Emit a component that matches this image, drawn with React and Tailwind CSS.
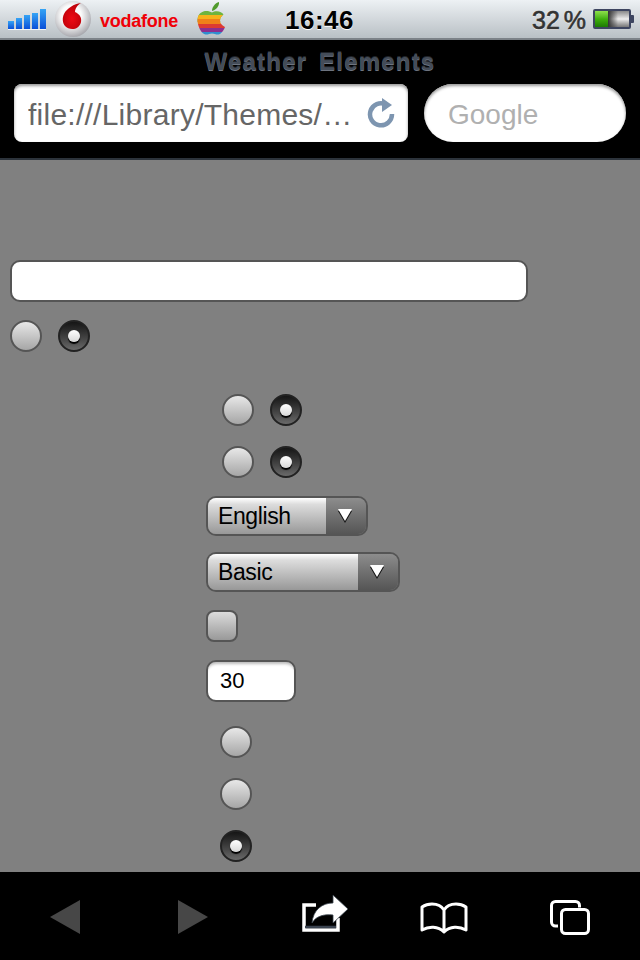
import React from 'react';

const Radio = ({ on }) =>
  on ? (
    <div className="w-8 h-8 rounded-full border-2 border-[#222] bg-gradient-to-b from-[#161616] to-[#6a6a6a] flex items-center justify-center flex-shrink-0">
      <div className="w-3 h-3 rounded-full bg-gradient-to-b from-white to-[#d8d8d8] shadow-[0_2px_1px_#000]" />
    </div>
  ) : (
    <div className="w-8 h-8 rounded-full border-2 border-[#555] bg-gradient-to-b from-[#e8e8e8] to-[#a6a6a6] flex-shrink-0" />
  );

const Select = ({ label, width }) => (
  <div className={`${width} h-10 rounded-[10px] border-2 border-[#555] flex overflow-hidden`}>
    <div className="flex-1 pl-[10px] text-[23px] tracking-[-0.4px] leading-[37px] text-black bg-[linear-gradient(#fff_0%,#dcdcdc_18%,#989898_100%)]">{label}</div>
    <div className="w-[40px] pr-[2px] flex items-center justify-center bg-gradient-to-b from-[#8d8d8d] to-[#555]">
      <svg width="16" height="16" viewBox="0 0 16 16">
        <path d="M1 3h14L8 15z" fill="#111" />
        <path d="M1 1h14L8 13z" fill="#fff" />
      </svg>
    </div>
  </div>
);

const Signal = () => (
  <svg width="40" height="22" viewBox="0 0 40 22" className="flex-shrink-0">
    <defs>
      <linearGradient id="sig" x1="0" y1="0" x2="0" y2="1">
        <stop offset="0" stopColor="#35a4f5" />
        <stop offset="1" stopColor="#0a4fd8" />
      </linearGradient>
    </defs>
    <rect x="0" y="12" width="6" height="8" fill="url(#sig)" />
    <rect x="8" y="9" width="6" height="11" fill="url(#sig)" />
    <rect x="16" y="6" width="6" height="14" fill="url(#sig)" />
    <rect x="24" y="4" width="6" height="16" fill="url(#sig)" />
    <rect x="32" y="0" width="6" height="20" fill="url(#sig)" />
    <rect x="0" y="20" width="38" height="1" fill="#fff" opacity="0.8" />
  </svg>
);

const VodafoneLogo = () => (
  <svg width="36" height="36" viewBox="0 0 36 36" className="flex-shrink-0">
    <defs>
      <radialGradient id="vball" cx="0.45" cy="0.4" r="0.62">
        <stop offset="0.45" stopColor="#fafafa" />
        <stop offset="1" stopColor="#a4a4aa" />
      </radialGradient>
      <radialGradient id="vred" cx="0.5" cy="0.6" r="0.65">
        <stop offset="0" stopColor="#ee0a14" />
        <stop offset="1" stopColor="#b60008" />
      </radialGradient>
    </defs>
    <circle cx="18" cy="18" r="18" fill="url(#vball)" />
    <path d="M26 2C19 3 12 7 9 13c-2 4-1.500 9 1 12 3 3.500 9 4 12.500 1.500 3.500-2.500 4.500-7 3-10.500-1-2.500-3.500-4-5.500-5 0-3.500 2.500-7 6-9z" fill="url(#vred)" />
  </svg>
);

const AppleLogo = () => (
  <svg width="30" height="34" viewBox="0 0 30 34" className="flex-shrink-0">
    <defs>
      <clipPath id="apl">
        <path d="M15 10.500C12 8.500 7 8 3.500 11 .5 13.500 0 18 1 22c1 4.500 4 10 7.500 10.500 2.500.3 4-1 6.500-1s4 1.300 6.500 1c2.500-.4 5-3.500 6.500-7.500-3-1.500-5-3.500-5-6.500 0-2.500 1.500-4.500 3.500-6C25 9.500 19 8 15 10.500z" />
      </clipPath>
    </defs>
    <path d="M15 9c0-4 3-8 7-9 .5 4-3 8-7 9z" fill="#4f9a2c" />
    <g clipPath="url(#apl)">
      <rect width="30" height="14" y="6" fill="#6eb43f" />
      <rect width="30" height="4" y="13" fill="#f6b21b" />
      <rect width="30" height="5" y="17" fill="#f08019" />
      <rect width="30" height="4" y="22" fill="#dd3a32" />
      <rect width="30" height="4" y="26" fill="#8d2f8f" />
      <rect width="30" height="4" y="30" fill="#2f8fd0" />
    </g>
  </svg>
);

const Battery = () => (
  <div className="flex items-center flex-shrink-0">
    <div className="w-[38px] h-[20px] border-2 border-[#3d4560] rounded-[2px] flex overflow-hidden bg-gradient-to-b from-[#8a8a8a] via-[#eee] to-[#777]">
      <div className="w-[13px] bg-gradient-to-b from-[#8ee04a] via-[#3fb00c] to-[#1c7a04]" />
      <div className="w-[10px] bg-gradient-to-r from-[#333] to-transparent" />
    </div>
    <div className="w-[3px] h-[8px] bg-[#3d4560] rounded-r-[1px]" />
  </div>
);

const StatusBar = () => (
  <div className="h-10 relative flex items-center border-b-2 border-[#7c8288] bg-gradient-to-b from-[#edf1f4] to-[#b9c0c5] font-['Liberation_Sans',sans-serif]">
    <div className="pl-2 pt-[1px]"><Signal /></div>
    <div className="ml-[7px]"><VodafoneLogo /></div>
    <div className="ml-[9px] w-[97px] pt-[3px] text-[18px] leading-[20px] font-bold text-[#f00008] tracking-[-0.25px]">vodafone</div>
    <AppleLogo />
    <div className="ml-[58px] pt-[1px] text-[26px] leading-[30px] font-bold text-black tracking-[0.5px] [text-shadow:0_1px_0_#fff]">16:46</div>
    <div className="ml-auto pt-[2px] text-[25px] leading-[30px] text-[#333] [-webkit-text-stroke:0.6px_#333] [word-spacing:-3px] [text-shadow:0_1px_0_#fff]">32 %</div>
    <div className="ml-[7px] mr-[6px]"><Battery /></div>
  </div>
);

const Header = () => (
  <div className="h-[120px] bg-black border-b-2 border-[#2c333b] font-['Liberation_Sans',sans-serif]">
    <div className="h-[44px] flex items-center justify-center text-[24px] font-bold text-[#444c58] [word-spacing:4px] tracking-[1.2px] [text-shadow:0_1px_0_#6d7480,0_-1px_0_#20242a]">
      Weather Elements
    </div>
    <div className="flex pl-[14px] gap-4">
      <div className="w-[394px] h-[58px] bg-white rounded-[8px] flex items-center pl-[14px] pr-[13px] shadow-[inset_0_2px_3px_#999]">
        <span className="flex-1 pt-[3px] text-[30px] leading-[34px] tracking-[0.25px] text-[#666] whitespace-nowrap overflow-hidden">file:///Library/Themes/…</span>
        <svg width="28" height="30" viewBox="0 0 28 30" fill="none" className="flex-shrink-0">
          <path d="M19 6.500A11 11 0 1 0 25 16" stroke="#7d95b0" strokeWidth="4.500" />
          <path d="M15 0l10 7-10 7z" fill="#7d95b0" />
        </svg>
      </div>
      <div className="w-[202px] h-[58px] bg-white rounded-full flex items-center pl-6 pt-[3px] text-[28px] text-[#b0b0b0] shadow-[inset_0_2px_3px_#999]">
        Google
      </div>
    </div>
  </div>
);

const Page = () => (
  <div className="h-[712px] bg-[#808080] overflow-hidden font-['Liberation_Sans',sans-serif]">
    <div className="mt-[100px] ml-[10px] w-[518px] h-[42px] bg-white rounded-[10px] border-2 border-[#555]" />
    <div className="mt-[18px] ml-[10px] flex gap-4">
      <Radio />
      <Radio on />
    </div>
    <div className="mt-[42px] ml-[222px] flex gap-4">
      <Radio />
      <Radio on />
    </div>
    <div className="mt-5 ml-[222px] flex gap-4">
      <Radio />
      <Radio on />
    </div>
    <div className="mt-[18px] ml-[206px]">
      <Select label="English" width="w-[162px]" />
    </div>
    <div className="mt-4 ml-[206px]">
      <Select label="Basic" width="w-[194px]" />
    </div>
    <div className="mt-[18px] ml-[206px] w-8 h-8 rounded-[8px] border-2 border-[#555] bg-gradient-to-b from-[#dcdcdc] to-[#999]" />
    <div className="mt-[18px] ml-[206px] w-[90px] h-[42px] rounded-[10px] border-2 border-[#555] bg-white pl-3 text-[22px] leading-[37px] text-black shadow-[inset_0_4px_3px_-2px_#bbb]">
      30
    </div>
    <div className="mt-6 ml-[220px]"><Radio /></div>
    <div className="mt-5 ml-[220px]"><Radio /></div>
    <div className="mt-5 ml-[220px]"><Radio on /></div>
  </div>
);

const Toolbar = () => (
  <div className="h-[88px] bg-black">
    <svg width="640" height="88" viewBox="0 0 640 88" className="block">
      {/* back / forward */}
      <path d="M80 28v34L50 45z" fill="#474747" />
      <path d="M178 28v34l30-17z" fill="#474747" />
      {/* share */}
      <path d="M316 33h-12v25h34V46" fill="none" stroke="#fff" strokeWidth="3.500" />
      <path d="M305 55h31" stroke="#3a4350" strokeWidth="2.500" />
      <path d="M333 23l15 14-15 14v-8c-9-1-17 1-21 8 1-13 10-20 21-20z" fill="#fff" stroke="#39424d" strokeWidth="0.800" />
      {/* bookmarks */}
      <path d="M444 38c-3-5-8-6-12-6s-7 1-10 3v23c7-4 16-4 22 2 6-6 15-6 22-2V35c-3-2-6-3-10-3s-9 1-12 6zM444 38v22" fill="none" stroke="#fff" strokeWidth="3" strokeLinejoin="round" />
      {/* tabs */}
      <rect x="561.500" y="37.500" width="27" height="24" rx="4" fill="none" stroke="#fff" strokeWidth="3" />
      <path d="M558 54h-2.500a4 4 0 0 1-4-4V33.500a4 4 0 0 1 4-4h20a4 4 0 0 1 4 4v2" fill="none" stroke="#fff" strokeWidth="3" />
    </svg>
  </div>
);

export default function App() {
  return (
    <div className="w-[640px] h-[960px] overflow-hidden">
      <StatusBar />
      <Header />
      <Page />
      <Toolbar />
    </div>
  );
}
